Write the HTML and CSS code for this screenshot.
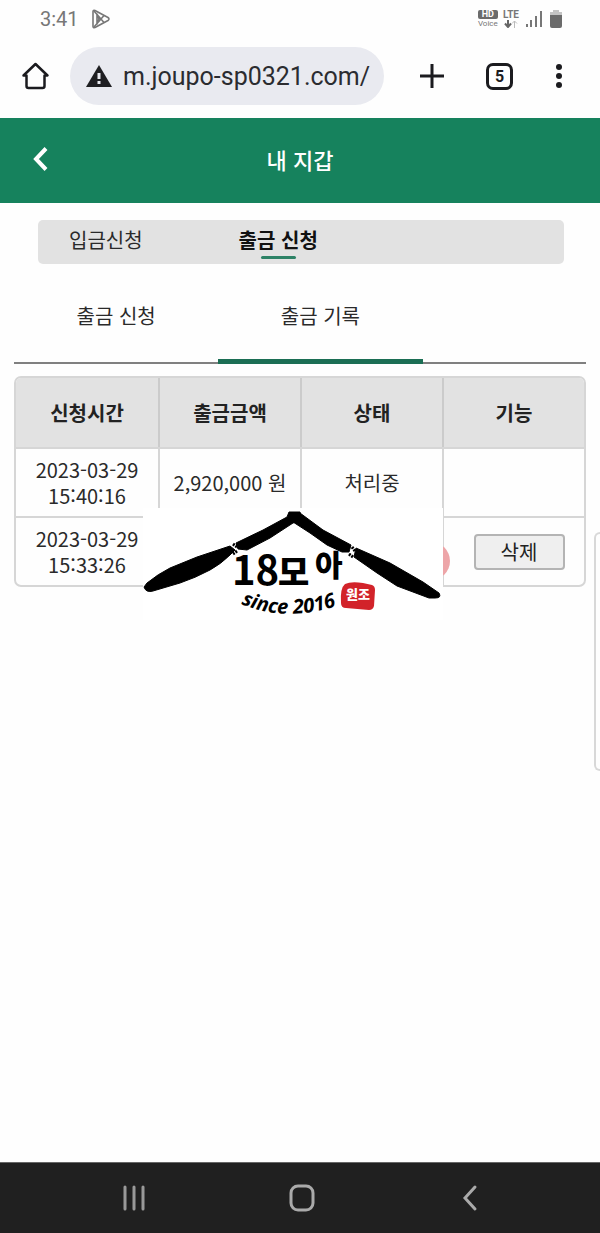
FILE: index.html
```
<!DOCTYPE html>
<html lang="ko">
<head>
    <meta charset="UTF-8">
    <meta name="viewport" content="width=device-width, initial-scale=1.0">
    <title>내 지갑</title>
    <link rel="stylesheet" href="styles.css">
</head>
<body>
    <div class="status-bar">
        <span class="time">3:41</span>
        <svg class="play" width="20" height="20" viewBox="0 0 20 20" fill="none" stroke="#777" stroke-width="1.6" stroke-linejoin="round">
            <path d="M2 2.5Q2 1 4 1.5L17 8.500Q19 10 17 11.500L4 18.500Q2 19 2 17.500Z"/>
            <path d="M3 2L13 13.500M3 18L13 6.500M8 10L6 5V15Z"/>
        </svg>
        <div class="status-icons">
            <div class="stack">
                <span class="hd">HD</span>
                <span class="voice">Voice</span>
            </div>
            <div class="stack">
                <span class="lte">LTE</span>
                <svg width="14" height="8" viewBox="0 0 14 8" fill="none">
                    <path d="M4 0V6M1 3.500L4 7L7 3.500" stroke="#666" stroke-width="2"/>
                    <path d="M10.500 8V1M8 3.500L10.500 1L13 3.500" stroke="#bbb"/>
                </svg>
            </div>
            <svg class="signal" width="17" height="18" viewBox="0 0 17 18" fill="#777">
                <path d="M0 14h2v3H0zM4 10h2v7H4zM9 6h2v11H9zM14 1h2v16h-2z"/>
            </svg>
            <svg width="12" height="18" viewBox="0 0 12 18">
                <path d="M3 0h6v2h3v4H0V2h3z" fill="#c4c4c4"/>
                <path d="M0 5h12v11q0 2-2 2H2q-2 0-2-2z" fill="#6b6b6b"/>
            </svg>
        </div>
    </div>

    <div class="address-bar">
        <button class="icon-btn" aria-label="Home">
            <svg width="28" height="28" viewBox="0 0 28 28" fill="none" stroke="#1b1b1f" stroke-width="2.500" stroke-linejoin="round">
                <path d="M1.500 13.500L13.500 2L25.500 13.500H22.500V24Q22.500 26 20.500 26H6.500Q4.500 26 4.500 24V13.500Z"/>
            </svg>
        </button>
        <div class="url-box">
            <svg width="26" height="24" viewBox="0 0 26 24">
                <path d="M13 1L26 23H0Z" fill="#1f1f22"/>
                <path d="M11.500 9h3v6h-3zM11.500 17h3v3h-3z" fill="#e9eaf0"/>
            </svg>
            <input type="text" class="url" aria-label="URL" value="m.joupo-sp0321.com/">
        </div>
        <div class="browser-actions">
            <button class="icon-btn" aria-label="New tab">
                <svg width="24" height="24" viewBox="0 0 24 24" stroke="#1b1b1f" stroke-width="3">
                    <path d="M12 0V24M0 12H24"/>
                </svg>
            </button>
            <button class="icon-btn tabs-btn" aria-label="Tabs">5</button>
            <button class="icon-btn" aria-label="Menu">
                <svg width="8" height="26" viewBox="0 0 8 26" fill="#1b1b1f">
                    <circle cx="4" cy="4" r="3"/>
                    <circle cx="4" cy="13" r="3"/>
                    <circle cx="4" cy="22" r="3"/>
                </svg>
            </button>
        </div>
    </div>

    <header class="header">
        <button class="icon-btn back" aria-label="Back">
            <svg width="16" height="24" viewBox="0 0 16 24" fill="none" stroke="#fff" stroke-width="4">
                <path d="M14 1.500L4 12L14 22.500"/>
            </svg>
        </button>
        <h1>내 지갑</h1>
    </header>

    <main>
        <nav class="segment">
            <a href="#">입금신청</a>
            <a href="#" class="active">출금 신청</a>
        </nav>

        <nav class="tabs">
            <a href="#">출금 신청</a>
            <a href="#" class="active">출금 기록</a>
        </nav>

        <div class="table-wrap">
            <table>
                <thead>
                    <tr>
                        <th>신청시간</th>
                        <th>출금금액</th>
                        <th>상태</th>
                        <th>기능</th>
                    </tr>
                </thead>
                <tbody>
                    <tr>
                        <td>2023-03-29<br>15:40:16</td>
                        <td>2,920,000 원</td>
                        <td>처리중</td>
                        <td></td>
                    </tr>
                    <tr>
                        <td>2023-03-29<br>15:33:26</td>
                        <td></td>
                        <td></td>
                        <td class="action"><button class="delete">삭제</button></td>
                    </tr>
                </tbody>
            </table>
            <div class="dot"></div>
            <svg class="logo" width="300" height="112" viewBox="0 0 300 112">
                <g stroke="#000" stroke-width="1" stroke-linejoin="round">
                    <path d="M1 79L4 75Q15 66 27 60L54 49L87 38L92 42L87 47Q78 56 67 62Q52 70 37 75L10 83Q3 85 1 79Z"/>
                    <path d="M93 35L120 22L144 9L146 4L157 4L159 12L150 15L127 30L104 42L95 41Z"/>
                    <path d="M157 5L180 22L208 37L206 44L199 44L184 37L167 25L150 14Z"/>
                    <path d="M213 40L247 55L280 74L296 85Q299 90 292 90L286 90L254 78L234 65L211 49Z"/>
                </g>
                <path d="M90 36l4 3M94 43l-4 3M206 46l4 3M209 39l3 4" stroke="#000" stroke-width="3" stroke-dasharray="2 1"/>
                <text class="digits" x="89" y="77">18</text>
                <text class="mo" x="135" y="77">모</text>
                <text class="ah" x="172" y="68">아</text>
                <path id="arc" d="M98 96Q148 117 208 93" fill="none"/>
                <text class="since"><textPath href="#arc">since 2016</textPath></text>
                <path d="M202 76Q208 73 220 75L229 77Q232 78 232 82L231 98Q230 102 226 102L203 100Q198 100 198 95Q197 80 202 76Z" fill="#d2232a"/>
                <text class="stamp" x="215" y="91">원조</text>
            </svg>
        </div>
    </main>

    <div class="edge-panel"></div>

    <footer class="nav-bar">
        <button class="icon-btn" aria-label="Recents">
            <svg width="28" height="28" viewBox="0 0 28 28" stroke="#999" stroke-width="3" stroke-linecap="round">
                <path d="M5 3V25M14 3V25M23 3V25"/>
            </svg>
        </button>
        <button class="icon-btn" aria-label="Home">
            <svg width="28" height="28" viewBox="0 0 28 28" fill="none" stroke="#aaa" stroke-width="3">
                <rect x="3" y="2" width="22" height="24" rx="7"/>
            </svg>
        </button>
        <button class="icon-btn" aria-label="Back">
            <svg width="28" height="28" viewBox="0 0 28 28" fill="none" stroke="#aaa" stroke-width="3" stroke-linecap="round">
                <path d="M19 3L9 14L19 25"/>
            </svg>
        </button>
    </footer>
</body>
</html>
```
FILE: styles.css
```
* {
    box-sizing: border-box;
}
body {
    position: relative;
    display: flex;
    flex-direction: column;
    min-height: 100vh;
    margin: 0;
    font-family: "Noto Sans CJK KR", sans-serif;
    font-size: 20px;
    color: #2a2a2a;
    background-color: #fefefe;
    overflow-x: hidden;
}
a {
    color: inherit;
    text-decoration: none;
}
.icon-btn {
    display: flex;
    align-items: center;
    justify-content: center;
    padding: 0;
    border: none;
    background: none;
    cursor: pointer;
}

/* phone status bar */
.status-bar {
    display: flex;
    align-items: center;
    height: 38px;
    padding: 0 38px 0 40px;
    font-family: Roboto, sans-serif;
    color: #777;
}
.play {
    margin-left: 12px;
}
.status-icons {
    display: flex;
    align-items: center;
    gap: 5px;
    margin-left: auto;
}
.signal {
    margin: 0 2px;
}
.stack {
    display: flex;
    flex-direction: column;
    align-items: center;
    line-height: 9px;
}
.hd {
    width: 20px;
    border-radius: 2px;
    background-color: #6b6b6b;
    color: #fff;
    font-size: 9px;
    font-weight: 700;
    text-align: center;
}
.voice {
    font-size: 8px;
}
.lte {
    font-size: 10px;
    font-weight: 700;
    line-height: 10px;
}

/* browser bar */
.address-bar {
    display: flex;
    align-items: center;
    height: 80px;
    padding: 0 37px 4px 22px;
}
.url-box {
    flex: 1;
    display: flex;
    align-items: center;
    gap: 11px;
    min-width: 0;
    height: 58px;
    margin: 0 36px 0 20px;
    padding: 0 8px 0 16px;
    border-radius: 29px;
    background-color: #e9eaf0;
}
.url {
    flex: 1;
    min-width: 0;
    padding: 0;
    border: none;
    background: none;
    font-family: Roboto, sans-serif;
    font-size: 25px;
    color: #2b2c30;
    outline: none;
}
.browser-actions {
    display: flex;
    align-items: center;
    gap: 42px;
}
.tabs-btn {
    width: 27px;
    height: 27px;
    border: 3px solid #1b1b1f;
    border-radius: 7px;
    font-family: Roboto, sans-serif;
    font-size: 16px;
    font-weight: 700;
    color: #1b1b1f;
}

/* page header */
.header {
    display: grid;
    grid-template-columns: 48px 1fr 48px;
    align-items: center;
    height: 85px;
    padding: 0 16px 4px;
    background-color: #16825d;
    color: #fff;
}
.header h1 {
    margin: 0;
    font-size: 22px;
    font-weight: 500;
    text-align: center;
}

main {
    flex: 1;
    padding: 17px 14px;
}
.segment {
    display: flex;
    gap: 96px;
    height: 44px;
    margin: 0 22px 0 24px;
    padding: 0 31px;
    border-radius: 5px;
    background-color: #e2e2e2;
    line-height: 40px;
}
.segment .active {
    display: flex;
    flex-direction: column;
    align-items: center;
    font-weight: 700;
    color: #111;
}
.segment .active::after {
    content: "";
    width: 35px;
    height: 3px;
    margin-top: -4px;
    border-radius: 2px;
    background-color: #2d8266;
}
.tabs {
    display: flex;
    height: 100px;
    margin-bottom: 12px;
    border-bottom: 2px solid #808080;
}
.tabs a {
    flex: 0 0 calc(100% / 14 * 5);
    height: 100px;
    line-height: 104px;
    text-align: center;
}
.tabs .active {
    border-bottom: 5px solid #1b6e54;
}

.table-wrap {
    position: relative;
}
table {
    width: 100%;
    table-layout: fixed;
    border: 2px solid #d6d6d6;
    border-radius: 7px;
    border-spacing: 0;
    overflow: hidden;
}
th {
    height: 69px;
    padding: 0;
    background-color: #e2e2e2;
    font-weight: 700;
    color: #222;
}
td {
    height: 69px;
    padding: 0;
    border-top: 2px solid #d6d6d6;
    line-height: 26px;
    text-align: center;
}
th + th,
td + td {
    border-left: 2px solid #d6d6d6;
}
th + th {
    border-left-color: #cbcbcb;
}
.action {
    padding-left: 10px;
}
.delete {
    width: 91px;
    height: 36px;
    padding: 0;
    border: 2px solid #b4b4b4;
    border-radius: 4px;
    background-color: #efefef;
    font-family: inherit;
    font-size: 20px;
    line-height: 28px;
    color: #222;
    cursor: pointer;
}

/* stamp and logo lie over the table */
.dot {
    position: absolute;
    top: 166px;
    left: 398px;
    width: 38px;
    height: 38px;
    border-radius: 50%;
    background-color: #eda5a8;
}
.logo {
    position: absolute;
    top: 132px;
    left: 129px;
    background-color: #fff;
}
.digits {
    font-size: 40px;
    font-weight: 700;
}
.mo {
    font-size: 34px;
    font-weight: 900;
}
.ah {
    font-size: 30px;
    font-weight: 900;
}
.since {
    font-family: "Open Sans", sans-serif;
    font-size: 20px;
    font-style: italic;
    font-weight: 700;
}
.stamp {
    font-size: 13px;
    font-weight: 900;
    fill: #fff;
    text-anchor: middle;
}

.edge-panel {
    position: absolute;
    top: 532px;
    right: 0;
    width: 6px;
    height: 239px;
    border: 2px solid #d8d8d8;
    border-right: none;
    border-radius: 8px 0 0 8px;
}

/* phone navigation bar */
.nav-bar {
    display: flex;
    align-items: center;
    justify-content: center;
    gap: 140px;
    height: 71px;
    padding-left: 3px;
    border-top: 1px solid #666;
    background-color: #202020;
}
```
